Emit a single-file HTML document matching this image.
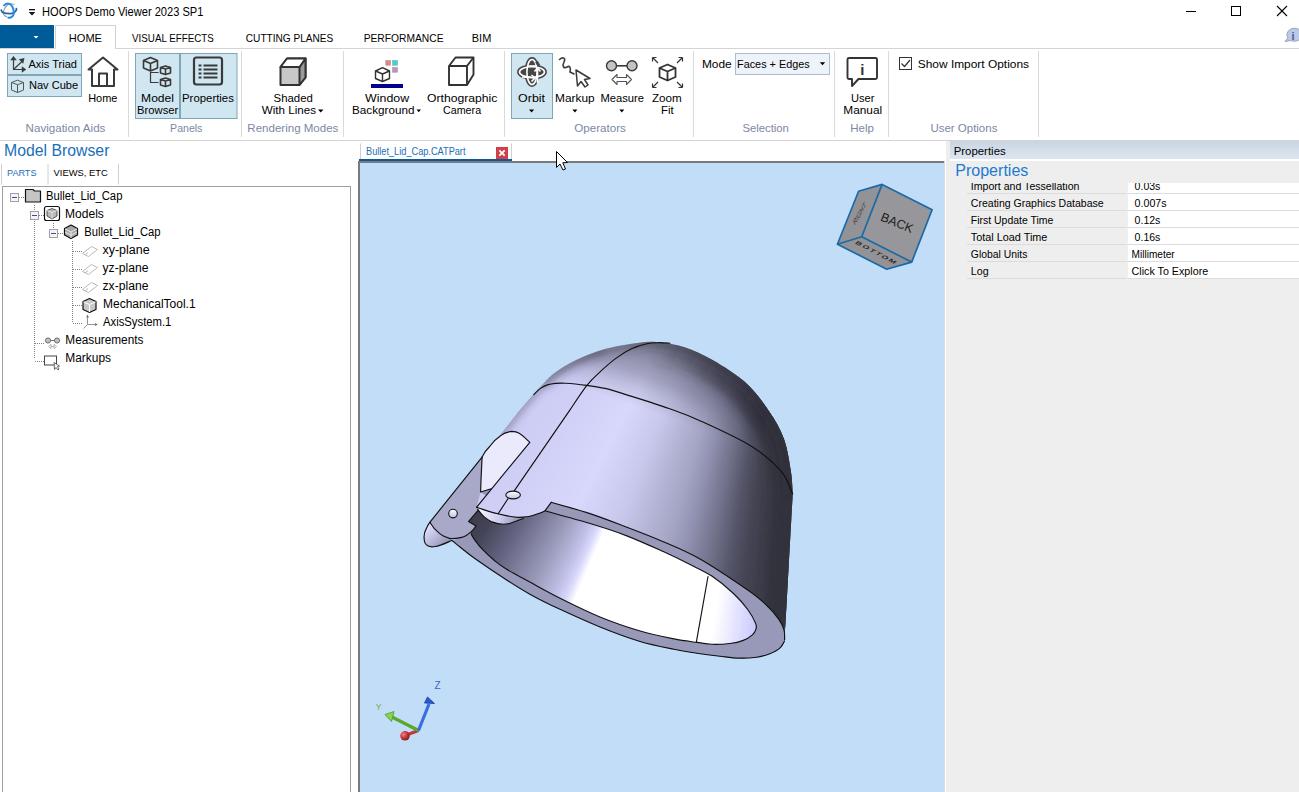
<!DOCTYPE html>
<html><head><meta charset="utf-8"><title>HOOPS Demo Viewer</title>
<style>html,body{margin:0;padding:0;width:1299px;height:792px;overflow:hidden;background:#fff}svg{display:block}text{font-family:"Liberation Sans",sans-serif}</style>
</head><body>
<svg width="1299" height="792" viewBox="0 0 1299 792" font-family="&quot;Liberation Sans&quot;, sans-serif">
<rect x="0" y="0" width="1299" height="792" fill="#ffffff" />
<g fill="none" stroke-linecap="round">
<path d="M13.9 4.5 C12 3.6 9 3.6 7.1 5.3 C5.5 6.8 4 9 3.3 12.1 C3 13.6 3.6 15 4.2 15.3 C5 16 5.8 16.4 6.6 16.6" stroke="#9a9ea4" stroke-width="1.2"/>
<path d="M1.3 10.1 C1.6 11.4 2.2 12.2 2.9 12.5 C4.5 13.4 6.3 13.7 10.1 13.7 C12 13.6 13.2 13.1 14.2 12.4 C15.3 11.6 16.1 10.9 16.3 10.1 C16.5 9.3 16.4 8.9 16.4 8.6" stroke="#1f66ad" stroke-width="1.8"/>
<path d="M4 5.3 C5 4.2 6.3 3.6 7.6 3.5 C9 3.5 10.2 4 11 5 C12 6 12.6 7 13.1 8.3 C13.7 10 13.9 11.8 13.8 13.4 C13.6 14.8 13.1 15.8 12.5 16.3 C11.6 17.2 10.6 17.6 9.5 17.8 L8.3 17.7" stroke="#2a8ce0" stroke-width="2"/>
</g>
<rect x="29" y="9" width="6" height="1.3" fill="#111"/><path d="M28.7 12 L35.3 12 L32 15.5 Z" fill="#111"/>
<text x="42.1" y="16.2" font-size="12.4" fill="#000" font-weight="normal" textLength="161.3" lengthAdjust="spacingAndGlyphs" >HOOPS Demo Viewer 2023 SP1</text>
<rect x="1186" y="11" width="10" height="1" fill="#000" />
<rect x="1231.5" y="6.5" width="9" height="9" fill="none" stroke="#000" stroke-width="1" />
<line x1="1277" y1="6" x2="1287" y2="16" stroke="#000" stroke-width="1.1" />
<line x1="1287" y1="6" x2="1277" y2="16" stroke="#000" stroke-width="1.1" />
<rect x="0" y="25" width="54" height="23" fill="#005c99" />
<path d="M33.5 36 L38.5 36 L36 38.6 Z" fill="#fff"/>
<path d="M55.5 48.5 V25.5 H115.5 V48.5" fill="#fff" stroke="#d0d0d0" stroke-width="1"/>
<line x1="0" y1="48.5" x2="55" y2="48.5" stroke="#d4d4d4" stroke-width="1" />
<line x1="115" y1="48.5" x2="1299" y2="48.5" stroke="#d4d4d4" stroke-width="1" />
<rect x="0" y="49" width="1299" height="0.01" fill="#fff" />
<text x="68.8" y="41.6" font-size="11.2" fill="#000" font-weight="normal" textLength="33.2" lengthAdjust="spacingAndGlyphs" >HOME</text>
<text x="132.0" y="41.6" font-size="11.2" fill="#000" font-weight="normal" textLength="81.9" lengthAdjust="spacingAndGlyphs" >VISUAL EFFECTS</text>
<text x="245.8" y="41.6" font-size="11.2" fill="#000" font-weight="normal" textLength="87.5" lengthAdjust="spacingAndGlyphs" >CUTTING PLANES</text>
<text x="363.7" y="41.6" font-size="11.2" fill="#000" font-weight="normal" textLength="79.8" lengthAdjust="spacingAndGlyphs" >PERFORMANCE</text>
<text x="471.8" y="41.6" font-size="11.2" fill="#000" font-weight="normal" textLength="19.5" lengthAdjust="spacingAndGlyphs" >BIM</text>
<g><path d="M1285 41.5 L1288 38 A7.5 6.5 0 1 1 1291 40.5 Z" fill="#b9c9e6" stroke="#8a94a8" stroke-width="0.8"/>
<text x="1291.5" y="40" font-size="11" font-weight="bold" fill="#4a5a9a" font-family="Liberation Serif">i</text></g>
<line x1="128.5" y1="51" x2="128.5" y2="137" stroke="#dadada" stroke-width="1" />
<line x1="241.5" y1="51" x2="241.5" y2="137" stroke="#dadada" stroke-width="1" />
<line x1="343.5" y1="51" x2="343.5" y2="137" stroke="#dadada" stroke-width="1" />
<line x1="504.5" y1="51" x2="504.5" y2="137" stroke="#dadada" stroke-width="1" />
<line x1="693.5" y1="51" x2="693.5" y2="137" stroke="#dadada" stroke-width="1" />
<line x1="834.5" y1="51" x2="834.5" y2="137" stroke="#dadada" stroke-width="1" />
<line x1="888.5" y1="51" x2="888.5" y2="137" stroke="#dadada" stroke-width="1" />
<line x1="1038.5" y1="51" x2="1038.5" y2="137" stroke="#dadada" stroke-width="1" />
<line x1="0" y1="140.5" x2="1299" y2="140.5" stroke="#d4d4d4" stroke-width="1" />
<text x="25.6" y="132.0" font-size="11.2" fill="#7c88a4" font-weight="normal" textLength="79.8" lengthAdjust="spacingAndGlyphs" >Navigation Aids</text>
<text x="170.1" y="132.0" font-size="11.2" fill="#7c88a4" font-weight="normal" textLength="32.3" lengthAdjust="spacingAndGlyphs" >Panels</text>
<text x="247.3" y="132.0" font-size="11.2" fill="#7c88a4" font-weight="normal" textLength="91.1" lengthAdjust="spacingAndGlyphs" >Rendering Modes</text>
<text x="574.3" y="132.0" font-size="11.2" fill="#7c88a4" font-weight="normal" textLength="51.6" lengthAdjust="spacingAndGlyphs" >Operators</text>
<text x="742.4" y="132.0" font-size="11.2" fill="#7c88a4" font-weight="normal" textLength="46.5" lengthAdjust="spacingAndGlyphs" >Selection</text>
<text x="850.2" y="132.0" font-size="11.2" fill="#7c88a4" font-weight="normal" textLength="23.7" lengthAdjust="spacingAndGlyphs" >Help</text>
<text x="930.4" y="132.0" font-size="11.2" fill="#7c88a4" font-weight="normal" textLength="67.0" lengthAdjust="spacingAndGlyphs" >User Options</text>
<rect x="7.5" y="53.5" width="74" height="21" fill="#d0e6f1" stroke="#7fa6b6" stroke-width="1" />
<rect x="7.5" y="75.5" width="74" height="21" fill="#d0e6f1" stroke="#7fa6b6" stroke-width="1" />
<g stroke="#3c3c3c" stroke-width="1.2" fill="none">
<path d="M13.5 59 V69.5 H24"/><path d="M13.5 69.5 L23 60.5"/>
</g>
<path d="M13.5 56 L10.2 60.3 H16.8 Z M26.2 69.5 L21.8 66.3 V72.7 Z M24.5 58 L18.8 59.3 L23.2 63.7 Z" fill="#3c3c3c"/>
<text x="28.5" y="67.9" font-size="11.8" fill="#000" font-weight="normal" textLength="48.4" lengthAdjust="spacingAndGlyphs" >Axis Triad</text>
<g stroke="#555" stroke-width="1" fill="none" stroke-linejoin="round">
<path d="M11.5 82.5 L17.5 80.2 L23.5 82.5 V90 L17.5 92.5 L11.5 90 Z"/><path d="M11.5 82.5 L17.5 84.7 L23.5 82.5 M17.5 84.7 V92.5"/>
</g>
<text x="28.9" y="89.3" font-size="11.8" fill="#000" font-weight="normal" textLength="49.3" lengthAdjust="spacingAndGlyphs" >Nav Cube</text>
<g stroke="#3a3a3a" stroke-width="2" fill="none" stroke-linejoin="round">
<path d="M88.5 69.5 L103 57.5 L117.5 69.5 H114 V86 H92 V69.5 Z"/><path d="M99 86 V73.5 H107 V86"/>
</g>
<text x="88.2" y="101.8" font-size="11.8" fill="#000" font-weight="normal" textLength="29.2" lengthAdjust="spacingAndGlyphs" >Home</text>
<rect x="135.5" y="53.5" width="44" height="65" fill="#d0e6f1" stroke="#7fa6b6" stroke-width="1" />
<rect x="180.5" y="53.5" width="56.5" height="65" fill="#d0e6f1" stroke="#7fa6b6" stroke-width="1" />
<g stroke="#3a3a3a" stroke-width="1.6" fill="none" stroke-linejoin="round">
<path d="M143.5 60.5 L150.5 57.5 L157.5 60.5 V68 L150.5 71 L143.5 68 Z M143.5 60.5 L150.5 63.5 L157.5 60.5 M150.5 63.5 V71"/>
<path d="M160.5 67.5 L165.5 66 L170.5 67.5 V73 L165.5 74.5 L160.5 73 Z M160.5 67.5 L165.5 69 L170.5 67.5 M165.5 69 V74.5"/>
<path d="M160.5 79.5 L165.5 78 L170.5 79.5 V85 L165.5 86.5 L160.5 85 Z M160.5 79.5 L165.5 81 L170.5 79.5 M165.5 81 V86.5"/>
<path d="M150.5 72 V82.5 H158.5 M150.5 72.5 H158.5" stroke-width="1.2"/>
</g>
<rect x="194" y="57.5" width="28" height="27" rx="2.5" fill="none" stroke="#3a3a3a" stroke-width="2.2"/>
<g fill="#3a3a3a"><rect x="198.5" y="64.5" width="3" height="2"/><rect x="203.5" y="64.5" width="14" height="2"/>
<rect x="198.5" y="68.5" width="3" height="2"/><rect x="203.5" y="68.5" width="14" height="2"/>
<rect x="198.5" y="72.5" width="3" height="2"/><rect x="203.5" y="72.5" width="14" height="2"/>
<rect x="198.5" y="76.5" width="3" height="2"/><rect x="203.5" y="76.5" width="14" height="2"/></g>
<text x="141.1" y="101.8" font-size="11.8" fill="#000" font-weight="normal" textLength="32.9" lengthAdjust="spacingAndGlyphs" >Model</text>
<text x="137.1" y="114.3" font-size="11.8" fill="#000" font-weight="normal" textLength="41.1" lengthAdjust="spacingAndGlyphs" >Browser</text>
<text x="182.0" y="101.8" font-size="11.8" fill="#000" font-weight="normal" textLength="51.9" lengthAdjust="spacingAndGlyphs" >Properties</text>
<g stroke="#333" stroke-width="2" stroke-linejoin="round">
<path d="M280.5 67 L287 58.5 H305.5 V77.5 L299.5 85 H280.5 Z" fill="#c8c8c8"/>
<path d="M299.5 85 V67 L305.5 58.5 V77.5 Z" fill="#9a9a9a"/>
<path d="M280.5 67 H299.5 L305.5 58.5 H287 Z" fill="#ffffff"/>
</g>
<text x="273.6" y="101.8" font-size="11.8" fill="#000" font-weight="normal" textLength="39.3" lengthAdjust="spacingAndGlyphs" >Shaded</text>
<text x="261.8" y="114.3" font-size="11.8" fill="#000" font-weight="normal" textLength="54.2" lengthAdjust="spacingAndGlyphs" >With Lines</text>
<path d="M318 109.5 L323.5 109.5 L320.75 112.5 Z" fill="#000"/>
<g stroke="#333" stroke-width="1.4" fill="#fff" stroke-linejoin="round">
<path d="M375.5 71 L382.5 67.7 L389.5 71 V78.5 L382.5 81.5 L375.5 78.5 Z"/><path d="M375.5 71 L382.5 74 L389.5 71 M382.5 74 V81.5" fill="none"/>
</g>
<rect x="371" y="84" width="32" height="4" fill="#000090"/>
<rect x="385.8" y="60.6" width="4.8" height="4.6" fill="#f08080" stroke="#999" stroke-width="0.6"/>
<rect x="392.6" y="60.6" width="4.8" height="4.6" fill="#20e0e0" stroke="#999" stroke-width="0.6"/>
<rect x="392.6" y="67.6" width="4.8" height="4.6" fill="#c090c8" stroke="#999" stroke-width="0.6"/>
<text x="365.1" y="101.5" font-size="11.8" fill="#000" font-weight="normal" textLength="44.0" lengthAdjust="spacingAndGlyphs" >Window</text>
<text x="352.0" y="114.4" font-size="11.8" fill="#000" font-weight="normal" textLength="62.4" lengthAdjust="spacingAndGlyphs" >Background</text>
<path d="M416.5 109.5 L421 109.5 L418.75 112.3 Z" fill="#000"/>
<g stroke="#333" stroke-width="1.9" fill="none" stroke-linejoin="round">
<path d="M449 66 L455.5 57.5 H473.5 V74.5 L467 85 H449 Z"/><path d="M449 66 H467 L473.5 57.5 M467 66 V85"/>
</g>
<text x="427.0" y="101.5" font-size="11.8" fill="#000" font-weight="normal" textLength="70.4" lengthAdjust="spacingAndGlyphs" >Orthographic</text>
<text x="443.0" y="114.4" font-size="11.8" fill="#000" font-weight="normal" textLength="38.1" lengthAdjust="spacingAndGlyphs" >Camera</text>
<rect x="511.5" y="53.5" width="41" height="65" fill="#d0e6f1" stroke="#7fa6b6" stroke-width="1" />
<g fill="none">
<ellipse cx="532" cy="72" rx="7.5" ry="9" fill="#474747"/>
<ellipse cx="532" cy="72" rx="12.5" ry="5.2" stroke="#474747" stroke-width="4.8" fill="#474747"/>
<ellipse cx="532" cy="72" rx="5.1" ry="12.5" stroke="#474747" stroke-width="4.8" fill="#474747"/>
<ellipse cx="532" cy="72" rx="12.5" ry="5.2" stroke="#fff" stroke-width="1.6"/>
<ellipse cx="532" cy="72" rx="5.1" ry="12.5" stroke="#fff" stroke-width="1.6"/>
<path d="M536.5 61.5 L539 66" stroke="#474747" stroke-width="3"/>
<path d="M527.5 66 H537" stroke="#fff" stroke-width="1.6"/>
<path d="M537.5 68 L537.5 83 M534.5 71.5 L537.5 68 L540.5 71.5" stroke="#fff" stroke-width="1.6"/>
<path d="M522 77 L535 78 M531.5 75 L535 78 L531.5 81.5" stroke="#fff" stroke-width="1.6"/>
</g>
<text x="518.1" y="102.0" font-size="11.8" fill="#000" font-weight="normal" textLength="26.9" lengthAdjust="spacingAndGlyphs" >Orbit</text>
<path d="M529 109.5 L534.2 109.5 L531.6 112.5 Z" fill="#000"/>
<path d="M559.5 59.5 C563 56.5 566 58 564 62 C562 66 563.5 69 567 67 C570 65 571 68 570 72 L574 74" fill="none" stroke="#3a3a3a" stroke-width="1.6" stroke-linecap="round"/>
<path d="M576 70 L577.5 86 L581 81.5 L585 87 L588 85 L584.5 79.5 L590 78.5 Z" fill="#fff" stroke="#3a3a3a" stroke-width="1.5" stroke-linejoin="round"/>
<text x="555.0" y="102.0" font-size="11.8" fill="#000" font-weight="normal" textLength="39.6" lengthAdjust="spacingAndGlyphs" >Markup</text>
<path d="M572.4 109.5 L577.4 109.5 L574.9 112.5 Z" fill="#000"/>
<circle cx="611.5" cy="65.8" r="5" fill="#c4c4c4" stroke="#3a3a3a" stroke-width="1.4"/>
<circle cx="632" cy="65.8" r="5" fill="#c4c4c4" stroke="#3a3a3a" stroke-width="1.4"/>
<line x1="616.5" y1="65.8" x2="627" y2="65.8" stroke="#3a3a3a" stroke-width="1.6"/>
<path d="M612 79.5 L617 74.5 V77.5 H626.5 V74.5 L631.5 79.5 L626.5 84.5 V81.5 H617 V84.5 Z" fill="#fff" stroke="#555" stroke-width="1.1" stroke-linejoin="round"/>
<text x="600.4" y="102.0" font-size="11.8" fill="#000" font-weight="normal" textLength="43.5" lengthAdjust="spacingAndGlyphs" >Measure</text>
<path d="M619.3 109.5 L624.3 109.5 L621.8 112.5 Z" fill="#000"/>
<g stroke="#333" stroke-width="1.2" fill="none">
<path d="M652.5 57.5 L658 63 M652.5 57.5 V61.5 M652.5 57.5 H656.5"/>
<path d="M682.5 57.5 L677 63 M682.5 57.5 V61.5 M682.5 57.5 H678.5"/>
<path d="M652.5 87.5 L658 82 M652.5 87.5 V83.5 M652.5 87.5 H656.5"/>
<path d="M682.5 87.5 L677 82 M682.5 87.5 V83.5 M682.5 87.5 H678.5"/>
</g>
<g stroke="#333" stroke-width="1.8" fill="#fff" stroke-linejoin="round">
<path d="M659.5 68 L667.5 64.5 L675.5 68 V77 L667.5 80.5 L659.5 77 Z"/><path d="M659.5 68 L667.5 71.5 L675.5 68 M667.5 71.5 V80.5" fill="none"/>
</g>
<text x="652.0" y="102.0" font-size="11.8" fill="#000" font-weight="normal" textLength="29.8" lengthAdjust="spacingAndGlyphs" >Zoom</text>
<text x="661.0" y="114.3" font-size="11.8" fill="#000" font-weight="normal" textLength="12.6" lengthAdjust="spacingAndGlyphs" >Fit</text>
<text x="701.9" y="68.1" font-size="11.8" fill="#000" font-weight="normal" textLength="29.8" lengthAdjust="spacingAndGlyphs" >Mode</text>
<rect x="735.5" y="53.5" width="94" height="21" fill="#eef3fa" stroke="#a9bcd8" stroke-width="1" />
<text x="737.0" y="68.1" font-size="11.8" fill="#000" font-weight="normal" textLength="72.7" lengthAdjust="spacingAndGlyphs" >Faces + Edges</text>
<path d="M819.8 62.2 L825.2 62.2 L822.5 65.3 Z" fill="#000"/>
<path d="M849 58 Q847.5 58 847.5 59.5 V77.5 Q847.5 79 849 79 H852 V86 L858.5 79 H875.5 Q877 79 877 77.5 V59.5 Q877 58 875.5 58 Z" fill="none" stroke="#333" stroke-width="1.9" stroke-linejoin="round"/>
<text x="862.3" y="74.5" font-size="15" font-weight="bold" font-family="Liberation Serif" fill="#333" text-anchor="middle">i</text>
<text x="851.0" y="102.0" font-size="11.8" fill="#000" font-weight="normal" textLength="23.4" lengthAdjust="spacingAndGlyphs" >User</text>
<text x="843.3" y="114.3" font-size="11.8" fill="#000" font-weight="normal" textLength="38.8" lengthAdjust="spacingAndGlyphs" >Manual</text>
<rect x="899.5" y="57.5" width="12" height="12" fill="#fff" stroke="#333" stroke-width="1" />
<path d="M901.5 63.5 L904.5 66.5 L910 60" fill="none" stroke="#333" stroke-width="1.2"/>
<text x="917.8" y="68.1" font-size="11.8" fill="#000" font-weight="normal" textLength="111.2" lengthAdjust="spacingAndGlyphs" >Show Import Options</text>
<text x="4.1" y="156.0" font-size="16.8" fill="#1a6fb8" font-weight="normal" textLength="105.3" lengthAdjust="spacingAndGlyphs" >Model Browser</text>
<line x1="1.5" y1="164" x2="1.5" y2="184.5" stroke="#d0d0d0" stroke-width="1" />
<line x1="48" y1="164" x2="48" y2="184.5" stroke="#d0d0d0" stroke-width="1" />
<line x1="118.5" y1="164" x2="118.5" y2="184.5" stroke="#d0d0d0" stroke-width="1" />
<text x="7.0" y="175.9" font-size="9.4" fill="#1a6fb8" font-weight="normal" textLength="29.5" lengthAdjust="spacingAndGlyphs" >PARTS</text>
<text x="53.6" y="175.9" font-size="9.4" fill="#000" font-weight="normal" textLength="54.2" lengthAdjust="spacingAndGlyphs" >VIEWS, ETC</text>
<rect x="2.5" y="186.5" width="348" height="620" fill="#fff" stroke="#a0a0a0" stroke-width="1" />
<rect x="358" y="161" width="587" height="631" fill="#7a7a7a" />
<rect x="360" y="163" width="584" height="629" fill="#c2ddf7" />
<line x1="944.5" y1="161" x2="944.5" y2="792" stroke="#dcdcdc" stroke-width="1" />
<line x1="360.5" y1="143.5" x2="360.5" y2="159" stroke="#d0d0d0" stroke-width="1" />
<line x1="511.5" y1="143.5" x2="511.5" y2="159" stroke="#d0d0d0" stroke-width="1" />
<rect x="359" y="159" width="153" height="2" fill="#0b5a99" />
<text x="366.0" y="155.2" font-size="10.6" fill="#1a70b8" font-weight="normal" textLength="99.5" lengthAdjust="spacingAndGlyphs" >Bullet_Lid_Cap.CATPart</text>
<rect x="496" y="147" width="12" height="12" fill="#cf4048" />
<path d="M499.3 150.3 L504.7 155.7 M504.7 150.3 L499.3 155.7" stroke="#fff" stroke-width="1.8"/>
<rect x="946" y="141" width="353" height="651" fill="#eeeeee" />
<defs><linearGradient id="phdr" x1="0" y1="0" x2="0" y2="1"><stop offset="0" stop-color="#c9d5e3"/><stop offset="1" stop-color="#dde6f0"/></linearGradient></defs>
<rect x="950" y="141" width="349" height="18" fill="url(#phdr)" />
<rect x="950" y="159" width="349" height="2" fill="#ffffff" />
<text x="953.7" y="154.9" font-size="11.8" fill="#000" font-weight="normal" textLength="52.0" lengthAdjust="spacingAndGlyphs" >Properties</text>
<text x="955.2" y="175.6" font-size="16" fill="#1e7ad0" font-weight="normal" textLength="73.2" lengthAdjust="spacingAndGlyphs" >Properties</text>
<rect x="1128" y="183" width="171" height="96" fill="#ffffff" />
<line x1="967" y1="193.5" x2="1299" y2="193.5" stroke="#dcdcdc" stroke-width="1" />
<line x1="967" y1="210.5" x2="1299" y2="210.5" stroke="#dcdcdc" stroke-width="1" />
<line x1="967" y1="227.5" x2="1299" y2="227.5" stroke="#dcdcdc" stroke-width="1" />
<line x1="967" y1="244.5" x2="1299" y2="244.5" stroke="#dcdcdc" stroke-width="1" />
<line x1="967" y1="261.5" x2="1299" y2="261.5" stroke="#dcdcdc" stroke-width="1" />
<line x1="967" y1="278.5" x2="1299" y2="278.5" stroke="#dcdcdc" stroke-width="1" />
<line x1="1127.5" y1="183" x2="1127.5" y2="279" stroke="#eeeeee" stroke-width="1" />
<clipPath id="tclip"><rect x="950" y="183" width="349" height="120"/></clipPath><g clip-path="url(#tclip)">
<text x="970.8" y="189.8" font-size="11.6" fill="#000" font-weight="normal" textLength="108.6" lengthAdjust="spacingAndGlyphs" >Import and Tessellation</text>
<text x="1134.6" y="189.8" font-size="11.6" fill="#000" font-weight="normal" textLength="25.8" lengthAdjust="spacingAndGlyphs" >0.03s</text>
<text x="970.8" y="206.6" font-size="11.6" fill="#000" font-weight="normal" textLength="132.9" lengthAdjust="spacingAndGlyphs" >Creating Graphics Database</text>
<text x="1134.6" y="206.6" font-size="11.6" fill="#000" font-weight="normal" textLength="32.0" lengthAdjust="spacingAndGlyphs" >0.007s</text>
<text x="970.8" y="223.6" font-size="11.6" fill="#000" font-weight="normal" textLength="82.6" lengthAdjust="spacingAndGlyphs" >First Update Time</text>
<text x="1134.6" y="223.6" font-size="11.6" fill="#000" font-weight="normal" textLength="25.8" lengthAdjust="spacingAndGlyphs" >0.12s</text>
<text x="970.8" y="240.6" font-size="11.6" fill="#000" font-weight="normal" textLength="76.6" lengthAdjust="spacingAndGlyphs" >Total Load Time</text>
<text x="1134.6" y="240.6" font-size="11.6" fill="#000" font-weight="normal" textLength="25.8" lengthAdjust="spacingAndGlyphs" >0.16s</text>
<text x="970.8" y="257.6" font-size="11.6" fill="#000" font-weight="normal" textLength="56.6" lengthAdjust="spacingAndGlyphs" >Global Units</text>
<text x="1131.6" y="257.6" font-size="11.6" fill="#000" font-weight="normal" textLength="43.1" lengthAdjust="spacingAndGlyphs" >Millimeter</text>
<text x="970.8" y="274.6" font-size="11.6" fill="#000" font-weight="normal" textLength="17.8" lengthAdjust="spacingAndGlyphs" >Log</text>
<text x="1131.6" y="274.6" font-size="11.6" fill="#000" font-weight="normal" textLength="76.6" lengthAdjust="spacingAndGlyphs" >Click To Explore</text>
</g>
<line x1="34.5" y1="205" x2="34.5" y2="358" stroke="#808080" stroke-width="1" stroke-dasharray="1 1"/>
<line x1="53.5" y1="223" x2="53.5" y2="230" stroke="#808080" stroke-width="1" stroke-dasharray="1 1"/>
<line x1="72.5" y1="241" x2="72.5" y2="322" stroke="#808080" stroke-width="1" stroke-dasharray="1 1"/>
<line x1="19" y1="197.5" x2="25" y2="197.5" stroke="#808080" stroke-width="1" stroke-dasharray="1 1"/>
<rect x="10.5" y="193.5" width="8" height="8" fill="#f4f4f4" stroke="#a0a0a0" stroke-width="1"/>
<rect x="12" y="197" width="5" height="1" fill="#3050b0"/>
<line x1="39" y1="215.5" x2="44" y2="215.5" stroke="#808080" stroke-width="1" stroke-dasharray="1 1"/>
<rect x="30.5" y="211.5" width="8" height="8" fill="#f4f4f4" stroke="#a0a0a0" stroke-width="1"/>
<rect x="32" y="215" width="5" height="1" fill="#3050b0"/>
<line x1="58" y1="233.5" x2="64" y2="233.5" stroke="#808080" stroke-width="1" stroke-dasharray="1 1"/>
<rect x="49.5" y="229.5" width="8" height="8" fill="#f4f4f4" stroke="#a0a0a0" stroke-width="1"/>
<rect x="51" y="233" width="5" height="1" fill="#3050b0"/>
<line x1="73" y1="251.5" x2="82" y2="251.5" stroke="#808080" stroke-width="1" stroke-dasharray="1 1"/>
<line x1="73" y1="269.5" x2="82" y2="269.5" stroke="#808080" stroke-width="1" stroke-dasharray="1 1"/>
<line x1="73" y1="287.5" x2="82" y2="287.5" stroke="#808080" stroke-width="1" stroke-dasharray="1 1"/>
<line x1="73" y1="305.5" x2="82" y2="305.5" stroke="#808080" stroke-width="1" stroke-dasharray="1 1"/>
<line x1="73" y1="323.5" x2="82" y2="323.5" stroke="#808080" stroke-width="1" stroke-dasharray="1 1"/>
<line x1="35" y1="343.5" x2="45" y2="343.5" stroke="#808080" stroke-width="1" stroke-dasharray="1 1"/>
<line x1="35" y1="361.5" x2="45" y2="361.5" stroke="#808080" stroke-width="1" stroke-dasharray="1 1"/>
<path d="M25.5 189.5 H33 L34.5 191 H40.5 V202 H25.5 Z" fill="#c4c4c4" stroke="#111" stroke-width="1.2" stroke-linejoin="round"/>
<rect x="44.5" y="206.5" width="15" height="14" rx="2" fill="#fff" stroke="#111" stroke-width="1.2"/>
<path d="M47 210.5 L52 208.5 L57 210.5 V216 L52 219 L47 216 Z" fill="#b8b8b8" stroke="#333" stroke-width="0.8"/><path d="M47 210.5 L52 212.5 L57 210.5 M52 212.5 V219" fill="none" stroke="#eee" stroke-width="0.8"/>
<path d="M64.5 228.5 L71 225 L77.5 228.5 V235 L71 238.5 L64.5 235 Z" fill="#a8a8a8" stroke="#111" stroke-width="1.2" stroke-linejoin="round"/><path d="M65 229 L71 232 L77 229 M71 232 V238 M65 232 L71 235 L77 232" fill="none" stroke="#e8e8e8" stroke-width="1"/>
<path d="M82.5 253.5 L91.5 246.5 L97.5 249.5 L88.5 256.5 Z M85 255.0 L88 252.5" fill="none" stroke="#b0b0b0" stroke-width="0.9"/>
<path d="M82.5 271.5 L91.5 264.5 L97.5 267.5 L88.5 274.5 Z M85 273.0 L88 270.5" fill="none" stroke="#b0b0b0" stroke-width="0.9"/>
<path d="M82.5 289.5 L91.5 282.5 L97.5 285.5 L88.5 292.5 Z M85 291.0 L88 288.5" fill="none" stroke="#b0b0b0" stroke-width="0.9"/>
<path d="M83 301.5 L89.5 298.5 L96 301.5 V309.5 L89.5 312.5 L83 309.5 Z" fill="#c8c8c8" stroke="#111" stroke-width="1.2" stroke-linejoin="round"/><path d="M83.5 302.0 L89.5 304.5 L95.5 302.0 M89.5 304.5 V312.0" fill="none" stroke="#fff" stroke-width="1"/>
<path d="M87.5 315.5 V324.5 H97 M87.5 324.5 L83.5 328.5" fill="none" stroke="#888" stroke-width="0.9"/><path d="M86 317.5 L87.5 314.5 L89 317.5 Z M95 323.0 L98 324.5 L95 326.0 Z" fill="#777"/>
<circle cx="48" cy="340.5" r="2.6" fill="#c0c0c0" stroke="#555" stroke-width="0.8"/><circle cx="57" cy="340.5" r="2.6" fill="#c0c0c0" stroke="#555" stroke-width="0.8"/><line x1="50.5" y1="340.5" x2="54.5" y2="340.5" stroke="#555" stroke-width="0.8"/><path d="M48.5 346.5 L51 344.3 V348.7 Z M56.5 346.5 L54 344.3 V348.7 Z M51 346.5 H54" fill="none" stroke="#999" stroke-width="0.7"/>
<rect x="44.5" y="356.0" width="12" height="9" fill="#fff" stroke="#444" stroke-width="1"/><path d="M54 362.5 L54.5 369.5 L56 367.5 L58 370.0 L59 369.0 L57.5 366.5 L59.5 366.0 Z" fill="#fff" stroke="#444" stroke-width="0.8"/>
<text x="46.1" y="199.6" font-size="12" fill="#000" font-weight="normal" textLength="76.3" lengthAdjust="spacingAndGlyphs" >Bullet_Lid_Cap</text>
<text x="65.1" y="217.6" font-size="12" fill="#000" font-weight="normal" textLength="38.8" lengthAdjust="spacingAndGlyphs" >Models</text>
<text x="84.2" y="235.7" font-size="12" fill="#000" font-weight="normal" textLength="76.4" lengthAdjust="spacingAndGlyphs" >Bullet_Lid_Cap</text>
<text x="102.5" y="253.7" font-size="12" fill="#000" font-weight="normal" textLength="47.1" lengthAdjust="spacingAndGlyphs" >xy-plane</text>
<text x="102.5" y="271.7" font-size="12" fill="#000" font-weight="normal" textLength="46.0" lengthAdjust="spacingAndGlyphs" >yz-plane</text>
<text x="102.5" y="289.6" font-size="12" fill="#000" font-weight="normal" textLength="46.0" lengthAdjust="spacingAndGlyphs" >zx-plane</text>
<text x="103.0" y="307.7" font-size="12" fill="#000" font-weight="normal" textLength="92.6" lengthAdjust="spacingAndGlyphs" >MechanicalTool.1</text>
<text x="103.0" y="325.7" font-size="12" fill="#000" font-weight="normal" textLength="68.4" lengthAdjust="spacingAndGlyphs" >AxisSystem.1</text>
<text x="65.3" y="343.5" font-size="12" fill="#000" font-weight="normal" textLength="78.1" lengthAdjust="spacingAndGlyphs" >Measurements</text>
<text x="65.3" y="361.5" font-size="12" fill="#000" font-weight="normal" textLength="45.7" lengthAdjust="spacingAndGlyphs" >Markups</text>
<defs>
<linearGradient id="bodyg" gradientUnits="userSpaceOnUse" x1="470" y1="440" x2="792" y2="551">
<stop offset="0" stop-color="#bcbce4"/>
<stop offset="0.2" stop-color="#d2d2f8"/>
<stop offset="0.42" stop-color="#d8d8fc"/>
<stop offset="0.6" stop-color="#b4b4d4"/>
<stop offset="0.7" stop-color="#9494b2"/>
<stop offset="0.78" stop-color="#68687f"/>
<stop offset="0.85" stop-color="#474757"/>
<stop offset="1" stop-color="#3d3d4a"/>
</linearGradient>
<linearGradient id="domeg" gradientUnits="userSpaceOnUse" x1="540.5" y1="374.1" x2="564.0" y2="306.0">
<stop offset="0" stop-color="#1e1e2a" stop-opacity="0"/>
<stop offset="0.25" stop-color="#1e1e2a" stop-opacity="0.12"/>
<stop offset="0.45" stop-color="#1e1e2a" stop-opacity="0.27"/>
<stop offset="0.75" stop-color="#1e1e2a" stop-opacity="0.42"/>
<stop offset="1" stop-color="#1e1e2a" stop-opacity="0.58"/>
</linearGradient>
<linearGradient id="intg" gradientUnits="userSpaceOnUse" x1="478" y1="525" x2="758" y2="622">
<stop offset="0" stop-color="#3c3c4a"/>
<stop offset="0.03" stop-color="#45455a"/>
<stop offset="0.14" stop-color="#6a6a88"/>
<stop offset="0.26" stop-color="#9898b8"/>
<stop offset="0.35" stop-color="#c0c0e8"/>
<stop offset="0.38" stop-color="#d8d8fc"/>
<stop offset="0.405" stop-color="#ffffff"/>
<stop offset="0.84" stop-color="#ffffff"/>
<stop offset="1" stop-color="#c4c4ff"/>
</linearGradient>
<linearGradient id="tipg" gradientUnits="userSpaceOnUse" x1="428" y1="528" x2="446" y2="548">
<stop offset="0" stop-color="#dcdcfc"/><stop offset="1" stop-color="#8c8cac"/>
</linearGradient>
<linearGradient id="clipface" gradientUnits="userSpaceOnUse" x1="480" y1="510" x2="530" y2="525">
<stop offset="0" stop-color="#f4f4ff"/><stop offset="0.45" stop-color="#c8c8ec"/><stop offset="1" stop-color="#6a6a84"/>
</linearGradient>
<linearGradient id="shadowg" gradientUnits="userSpaceOnUse" x1="475" y1="515" x2="545" y2="545">
<stop offset="0" stop-color="#3a3a48"/><stop offset="0.4" stop-color="#444456"/><stop offset="1" stop-color="#6a6a84"/>
</linearGradient>
<linearGradient id="hole1g" x1="0" y1="0" x2="0" y2="1">
<stop offset="0" stop-color="#ffffff"/><stop offset="1" stop-color="#c0c0e0"/>
</linearGradient>
</defs>
<clipPath id="bodyclip"><path d="M482.1 457.1 L509.0 423.8 C510.9 421.4 516.3 414.3 520.2 409.6 C524.1 404.9 528.4 399.9 532.3 395.5 C536.2 391.1 539.5 387.3 543.4 383.4 C547.3 379.5 550.1 376.2 555.5 372.3 C560.9 368.4 567.5 364.1 575.7 360.2 C584.0 356.3 594.4 351.9 605.0 349.0 C615.6 346.1 630.4 343.8 639.2 342.7 C648.0 341.6 650.4 341.4 658.0 342.2 C665.6 342.9 675.4 344.2 684.6 347.2 C693.8 350.2 702.8 354.3 713.0 360.3 C723.2 366.3 736.7 374.6 746.0 383.0 C755.3 391.4 762.4 401.5 768.7 410.8 C775.0 420.1 780.1 428.5 783.8 438.6 C787.5 448.7 789.4 462.2 790.9 471.4 C792.4 480.6 792.4 490.2 792.7 494.0 L785.2 628 L784.9 627.0 C784.8 629.4 785.3 637.7 784.4 641.3 C783.5 644.9 782.0 646.3 779.6 648.4 C777.2 650.5 773.6 652.2 769.8 653.7 C765.9 655.2 761.7 656.6 756.5 657.3 C751.3 658.0 744.9 658.3 738.8 658.1 C732.7 657.9 727.0 657.0 720.0 656.2 C713.0 655.4 704.7 654.4 697.0 653.3 C689.3 652.1 683.5 651.3 673.9 649.3 C664.3 647.3 651.6 644.9 639.3 641.2 C627.0 637.5 613.1 632.3 600.0 627.0 C586.9 621.7 572.2 615.0 560.6 609.6 C549.0 604.2 539.5 599.5 530.3 594.4 C521.1 589.3 514.7 585.1 505.5 579.2 C496.3 573.3 482.8 564.2 475.2 558.8 C467.6 553.4 463.8 550.0 460.0 547.0 C456.2 544.0 453.8 541.8 452.5 540.8 L451.8 540.5 C447 542.5 440 546 435.2 546.5 C431 547.3 427 546 425.3 543.5 C423.5 540 423.6 533 426.1 529.1 C427 526.5 428.5 524 429.8 522.3 L482.1 457.1 Z"/></clipPath>
<g clip-path="url(#bodyclip)"><path d="M810 50L120.6 628.5L124.9 633.6Z" fill="#c4c4ec"/><path d="M810 50L123.1 631.5L127.4 636.6Z" fill="#c4c4ec"/><path d="M810 50L125.6 634.5L130.0 639.6Z" fill="#c4c4ec"/><path d="M810 50L128.2 637.5L132.6 642.5Z" fill="#c5c5ed"/><path d="M810 50L130.8 640.5L135.2 645.5Z" fill="#c5c5ed"/><path d="M810 50L133.3 643.4L137.8 648.4Z" fill="#c5c5ed"/><path d="M810 50L135.9 646.4L140.4 651.3Z" fill="#c5c5ed"/><path d="M810 50L138.5 649.3L143.0 654.3Z" fill="#c5c5ed"/><path d="M810 50L141.2 652.2L145.7 657.2Z" fill="#c5c5ed"/><path d="M810 50L143.8 655.1L148.3 660.1Z" fill="#c6c6ee"/><path d="M810 50L146.5 658.0L151.0 662.9Z" fill="#c6c6ee"/><path d="M810 50L149.1 660.9L153.7 665.8Z" fill="#c6c6ee"/><path d="M810 50L151.8 663.8L156.4 668.7Z" fill="#c6c6ee"/><path d="M810 50L154.5 666.7L159.1 671.5Z" fill="#c6c6ee"/><path d="M810 50L157.2 669.5L161.8 674.3Z" fill="#c6c6ee"/><path d="M810 50L159.9 672.4L164.5 677.2Z" fill="#c7c7ef"/><path d="M810 50L162.6 675.2L167.2 680.0Z" fill="#c7c7ef"/><path d="M810 50L165.3 678.0L170.0 682.8Z" fill="#c7c7ef"/><path d="M810 50L168.1 680.8L172.8 685.6Z" fill="#c7c7ef"/><path d="M810 50L170.8 683.6L175.6 688.3Z" fill="#c7c7ef"/><path d="M810 50L173.6 686.4L178.3 691.1Z" fill="#c7c7ef"/><path d="M810 50L176.4 689.2L181.1 693.8Z" fill="#c8c8f0"/><path d="M810 50L179.2 691.9L184.0 696.6Z" fill="#c8c8f0"/><path d="M810 50L182.0 694.7L186.8 699.3Z" fill="#c8c8f0"/><path d="M810 50L184.8 697.4L189.6 702.0Z" fill="#c8c8f0"/><path d="M810 50L187.6 700.1L192.5 704.7Z" fill="#c8c8f0"/><path d="M810 50L190.5 702.8L195.3 707.4Z" fill="#c8c8f0"/><path d="M810 50L193.3 705.5L198.2 710.1Z" fill="#c9c9f1"/><path d="M810 50L196.2 708.2L201.1 712.8Z" fill="#c9c9f1"/><path d="M810 50L199.1 710.9L204.0 715.4Z" fill="#c9c9f1"/><path d="M810 50L202.0 713.5L206.9 718.0Z" fill="#c9c9f1"/><path d="M810 50L204.9 716.2L209.8 720.7Z" fill="#c9c9f1"/><path d="M810 50L207.8 718.8L212.8 723.3Z" fill="#c9c9f1"/><path d="M810 50L210.7 721.5L215.7 725.9Z" fill="#cacaf2"/><path d="M810 50L213.6 724.1L218.7 728.5Z" fill="#cacaf2"/><path d="M810 50L216.6 726.7L221.6 731.0Z" fill="#cacaf2"/><path d="M810 50L219.5 729.2L224.6 733.6Z" fill="#cacaf2"/><path d="M810 50L222.5 731.8L227.6 736.1Z" fill="#cacaf2"/><path d="M810 50L225.5 734.4L230.6 738.7Z" fill="#cacaf2"/><path d="M810 50L228.5 736.9L233.6 741.2Z" fill="#cbcbf3"/><path d="M810 50L231.5 739.4L236.6 743.7Z" fill="#cbcbf3"/><path d="M810 50L234.5 742.0L239.7 746.2Z" fill="#cbcbf3"/><path d="M810 50L237.5 744.5L242.7 748.7Z" fill="#cbcbf3"/><path d="M810 50L240.6 747.0L245.8 751.2Z" fill="#cbcbf3"/><path d="M810 50L243.6 749.4L248.8 753.6Z" fill="#cbcbf3"/><path d="M810 50L246.7 751.9L251.9 756.1Z" fill="#ccccf4"/><path d="M810 50L249.7 754.3L255.0 758.5Z" fill="#ccccf4"/><path d="M810 50L252.8 756.8L258.1 760.9Z" fill="#ccccf4"/><path d="M810 50L255.9 759.2L261.2 763.3Z" fill="#ccccf4"/><path d="M810 50L259.0 761.6L264.3 765.7Z" fill="#ccccf4"/><path d="M810 50L262.1 764.0L267.4 768.1Z" fill="#cdcdf4"/><path d="M810 50L265.2 766.4L270.6 770.4Z" fill="#cdcdf5"/><path d="M810 50L268.4 768.8L273.7 772.8Z" fill="#cdcdf5"/><path d="M810 50L271.5 771.1L276.9 775.1Z" fill="#cdcdf5"/><path d="M810 50L274.7 773.5L280.0 777.4Z" fill="#cecef5"/><path d="M810 50L277.8 775.8L283.2 779.7Z" fill="#cecef5"/><path d="M810 50L281.0 778.1L286.4 782.0Z" fill="#cecef5"/><path d="M810 50L284.2 780.4L289.6 784.3Z" fill="#cecef6"/><path d="M810 50L287.4 782.7L292.8 786.6Z" fill="#cfcff6"/><path d="M810 50L290.6 785.0L296.0 788.8Z" fill="#cfcff6"/><path d="M810 50L293.8 787.2L299.3 791.0Z" fill="#cfcff6"/><path d="M810 50L297.0 789.5L302.5 793.3Z" fill="#cfcff6"/><path d="M810 50L300.2 791.7L305.8 795.5Z" fill="#d0d0f6"/><path d="M810 50L303.5 793.9L309.0 797.7Z" fill="#d0d0f7"/><path d="M810 50L306.7 796.1L312.3 799.8Z" fill="#d0d0f7"/><path d="M810 50L310.0 798.3L315.6 802.0Z" fill="#d0d0f7"/><path d="M810 50L313.3 800.5L318.8 804.2Z" fill="#d1d1f7"/><path d="M810 50L316.5 802.7L322.1 806.3Z" fill="#d1d1f7"/><path d="M810 50L319.8 804.8L325.4 808.4Z" fill="#d1d1f7"/><path d="M810 50L323.1 806.9L328.8 810.5Z" fill="#d1d1f8"/><path d="M810 50L326.4 809.1L332.1 812.6Z" fill="#d2d2f8"/><path d="M810 50L329.7 811.2L335.4 814.7Z" fill="#d2d2f8"/><path d="M810 50L333.1 813.2L338.7 816.8Z" fill="#d2d2f8"/><path d="M810 50L336.4 815.3L342.1 818.8Z" fill="#d2d2f8"/><path d="M810 50L339.8 817.4L345.5 820.8Z" fill="#d3d3f8"/><path d="M810 50L343.1 819.4L348.8 822.9Z" fill="#d3d3f9"/><path d="M810 50L346.5 821.5L352.2 824.9Z" fill="#d3d3f9"/><path d="M810 50L349.8 823.5L355.6 826.9Z" fill="#d4d4f9"/><path d="M810 50L353.2 825.5L359.0 828.8Z" fill="#d4d4f9"/><path d="M810 50L356.6 827.5L362.4 830.8Z" fill="#d4d4fa"/><path d="M810 50L360.0 829.4L365.8 832.7Z" fill="#d5d5fa"/><path d="M810 50L363.4 831.4L369.2 834.7Z" fill="#d5d5fa"/><path d="M810 50L366.8 833.3L372.6 836.6Z" fill="#d5d5fa"/><path d="M810 50L370.2 835.2L376.1 838.5Z" fill="#d5d5fa"/><path d="M810 50L373.7 837.2L379.5 840.4Z" fill="#d6d6fa"/><path d="M810 50L377.1 839.1L383.0 842.2Z" fill="#d6d6fb"/><path d="M810 50L380.6 840.9L386.4 844.1Z" fill="#d6d6fb"/><path d="M810 50L384.0 842.8L389.9 845.9Z" fill="#d7d7fb"/><path d="M810 50L387.5 844.7L393.4 847.8Z" fill="#d7d7fb"/><path d="M810 50L390.9 846.5L396.9 849.6Z" fill="#d7d7fc"/><path d="M810 50L394.4 848.3L400.4 851.4Z" fill="#d8d8fc"/><path d="M810 50L397.9 850.1L403.9 853.2Z" fill="#d8d8fc"/><path d="M810 50L401.4 851.9L407.4 854.9Z" fill="#d8d8fc"/><path d="M810 50L404.9 853.7L410.9 856.7Z" fill="#d7d7fb"/><path d="M810 50L408.4 855.4L414.4 858.4Z" fill="#d6d6fa"/><path d="M810 50L411.9 857.2L417.9 860.1Z" fill="#d5d5f9"/><path d="M810 50L415.5 858.9L421.5 861.8Z" fill="#d4d4f8"/><path d="M810 50L419.0 860.6L425.0 863.5Z" fill="#d4d4f8"/><path d="M810 50L422.5 862.3L428.6 865.2Z" fill="#d3d3f7"/><path d="M810 50L426.1 864.0L432.1 866.8Z" fill="#d2d2f6"/><path d="M810 50L429.6 865.7L435.7 868.5Z" fill="#d1d1f5"/><path d="M810 50L433.2 867.3L439.3 870.1Z" fill="#d0d0f4"/><path d="M810 50L436.8 869.0L442.9 871.7Z" fill="#d0d0f4"/><path d="M810 50L440.4 870.6L446.4 873.3Z" fill="#cfcff3"/><path d="M810 50L443.9 872.2L450.0 874.9Z" fill="#cecef2"/><path d="M810 50L447.5 873.8L453.6 876.4Z" fill="#cdcdf1"/><path d="M810 50L451.1 875.4L457.3 878.0Z" fill="#ccccf0"/><path d="M810 50L454.7 876.9L460.9 879.5Z" fill="#ccccf0"/><path d="M810 50L458.3 878.5L464.5 881.0Z" fill="#cbcbef"/><path d="M810 50L462.0 880.0L468.1 882.5Z" fill="#cacaee"/><path d="M810 50L465.6 881.5L471.8 884.0Z" fill="#c9c9ed"/><path d="M810 50L469.2 883.0L475.4 885.5Z" fill="#c8c8ec"/><path d="M810 50L472.9 884.5L479.1 886.9Z" fill="#c7c7eb"/><path d="M810 50L476.5 885.9L482.7 888.4Z" fill="#c6c6ea"/><path d="M810 50L480.1 887.4L486.4 889.8Z" fill="#c4c4e8"/><path d="M810 50L483.8 888.8L490.0 891.2Z" fill="#c3c3e6"/><path d="M810 50L487.5 890.2L493.7 892.6Z" fill="#c1c1e4"/><path d="M810 50L491.1 891.6L497.4 894.0Z" fill="#c0c0e3"/><path d="M810 50L494.8 893.0L501.1 895.3Z" fill="#bebee1"/><path d="M810 50L498.5 894.4L504.8 896.7Z" fill="#bdbde0"/><path d="M810 50L502.2 895.7L508.5 898.0Z" fill="#bbbbde"/><path d="M810 50L505.9 897.1L512.2 899.3Z" fill="#babadc"/><path d="M810 50L509.6 898.4L515.9 900.6Z" fill="#b8b8da"/><path d="M810 50L513.3 899.7L519.6 901.9Z" fill="#b7b7d9"/><path d="M810 50L517.0 901.0L523.3 903.1Z" fill="#b5b5d7"/><path d="M810 50L520.7 902.2L527.0 904.4Z" fill="#b4b4d6"/><path d="M810 50L524.4 903.5L530.8 905.6Z" fill="#b2b2d4"/><path d="M810 50L528.2 904.7L534.5 906.8Z" fill="#b1b1d2"/><path d="M810 50L531.9 906.0L538.2 908.0Z" fill="#afafd0"/><path d="M810 50L535.6 907.2L542.0 909.2Z" fill="#aeaecf"/><path d="M810 50L539.4 908.3L545.7 910.3Z" fill="#acaccd"/><path d="M810 50L543.1 909.5L549.5 911.5Z" fill="#ababcc"/><path d="M810 50L546.9 910.7L553.3 912.6Z" fill="#a9a9ca"/><path d="M810 50L550.6 911.8L557.0 913.7Z" fill="#a8a8c8"/><path d="M810 50L554.4 912.9L560.8 914.8Z" fill="#a6a6c6"/><path d="M810 50L558.2 914.0L564.6 915.9Z" fill="#a5a5c5"/><path d="M810 50L561.9 915.1L568.4 917.0Z" fill="#a3a3c3"/><path d="M810 50L565.7 916.2L572.1 918.0Z" fill="#a1a1c1"/><path d="M810 50L569.5 917.3L575.9 919.0Z" fill="#9e9ebe"/><path d="M810 50L573.3 918.3L579.7 920.0Z" fill="#9c9cbc"/><path d="M810 50L577.1 919.3L583.5 921.0Z" fill="#9a9aba"/><path d="M810 50L580.9 920.3L587.3 922.0Z" fill="#9898b8"/><path d="M810 50L584.7 921.3L591.1 923.0Z" fill="#9595b5"/><path d="M810 50L588.5 922.3L594.9 923.9Z" fill="#9393b3"/><path d="M810 50L592.3 923.3L598.8 924.9Z" fill="#9191b1"/><path d="M810 50L596.1 924.2L602.6 925.8Z" fill="#8e8eae"/><path d="M810 50L599.9 925.1L606.4 926.7Z" fill="#8b8baa"/><path d="M810 50L603.7 926.0L610.2 927.5Z" fill="#8888a7"/><path d="M810 50L607.5 926.9L614.1 928.4Z" fill="#8686a3"/><path d="M810 50L611.4 927.8L617.9 929.3Z" fill="#8383a0"/><path d="M810 50L615.2 928.7L621.7 930.1Z" fill="#80809d"/><path d="M810 50L619.0 929.5L625.6 930.9Z" fill="#7d7d99"/><path d="M810 50L622.9 930.3L629.4 931.7Z" fill="#7a7a96"/><path d="M810 50L626.7 931.1L633.3 932.5Z" fill="#787892"/><path d="M810 50L630.6 931.9L637.1 933.2Z" fill="#75758f"/><path d="M810 50L634.4 932.7L641.0 934.0Z" fill="#72728b"/><path d="M810 50L638.3 933.5L644.8 934.7Z" fill="#6f6f88"/><path d="M810 50L642.1 934.2L648.7 935.4Z" fill="#6c6c84"/><path d="M810 50L646.0 934.9L652.6 936.1Z" fill="#686880"/><path d="M810 50L649.9 935.6L656.4 936.8Z" fill="#65657c"/><path d="M810 50L653.7 936.3L660.3 937.5Z" fill="#626279"/><path d="M810 50L657.6 937.0L664.2 938.1Z" fill="#5f5f75"/><path d="M810 50L661.5 937.7L668.0 938.7Z" fill="#5c5c71"/><path d="M810 50L665.3 938.3L671.9 939.3Z" fill="#59596d"/><path d="M810 50L669.2 938.9L675.8 939.9Z" fill="#56566a"/><path d="M810 50L673.1 939.5L679.7 940.5Z" fill="#535367"/><path d="M810 50L677.0 940.1L683.6 941.1Z" fill="#515164"/><path d="M810 50L680.9 940.7L687.5 941.6Z" fill="#4f4f61"/><path d="M810 50L684.7 941.2L691.4 942.1Z" fill="#4c4c5e"/><path d="M810 50L688.6 941.8L695.3 942.7Z" fill="#4a4a5b"/><path d="M810 50L692.5 942.3L699.1 943.1Z" fill="#484858"/><path d="M810 50L696.4 942.8L703.0 943.6Z" fill="#454555"/><path d="M810 50L700.3 943.3L706.9 944.1Z" fill="#444453"/><path d="M810 50L704.2 943.8L710.8 944.5Z" fill="#424252"/><path d="M810 50L708.1 944.2L714.8 944.9Z" fill="#424250"/><path d="M810 50L712.0 944.7L718.7 945.4Z" fill="#40404f"/><path d="M810 50L715.9 945.1L722.6 945.7Z" fill="#40404d"/><path d="M810 50L719.8 945.5L726.5 946.1Z" fill="#3e3e4c"/><path d="M810 50L723.7 945.9L730.4 946.5Z" fill="#3e3e4b"/><path d="M810 50L727.6 946.2L734.3 946.8Z" fill="#3e3e4b"/><path d="M810 50L731.6 946.6L738.2 947.1Z" fill="#3e3e4b"/><path d="M810 50L735.5 946.9L742.1 947.4Z" fill="#3e3e4b"/><path d="M810 50L739.4 947.2L746.0 947.7Z" fill="#3e3e4b"/><path d="M810 50L743.3 947.5L750.0 948.0Z" fill="#3e3e4b"/><path d="M810 50L747.2 947.8L753.9 948.2Z" fill="#3e3e4b"/><path d="M810 50L751.1 948.1L757.8 948.5Z" fill="#3e3e4b"/><path d="M810 50L755.1 948.3L761.7 948.7Z" fill="#3e3e4b"/><path d="M810 50L759.0 948.6L765.6 948.9Z" fill="#3e3e4b"/><path d="M810 50L762.9 948.8L769.6 949.1Z" fill="#3e3e4b"/><path d="M810 50L766.8 949.0L773.5 949.3Z" fill="#3e3e4b"/><path d="M810 50L770.7 949.1L777.4 949.4Z" fill="#3e3e4b"/><path d="M810 50L774.7 949.3L781.3 949.5Z" fill="#3e3e4b"/><path d="M810 50L778.6 949.5L785.3 949.7Z" fill="#3e3e4b"/><path d="M810 50L782.5 949.6L789.2 949.8Z" fill="#3e3e4b"/><path d="M810 50L786.4 949.7L793.1 949.8Z" fill="#3e3e4b"/><path d="M810 50L790.4 949.8L797.0 949.9Z" fill="#3e3e4b"/><path d="M810 50L794.3 949.9L801.0 950.0Z" fill="#3e3e4b"/><path d="M810 50L798.2 949.9L804.9 950.0Z" fill="#3e3e4b"/><path d="M810 50L802.1 950.0L808.8 950.0Z" fill="#3e3e4b"/><path d="M810 50L806.1 950.0L812.7 950.0Z" fill="#3e3e4b"/><path d="M810 50L810.0 950.0L816.7 950.0Z" fill="#3e3e4b"/><path d="M810 50L813.9 950.0L820.6 949.9Z" fill="#3e3e4b"/><path d="M810 50L817.9 950.0L824.5 949.9Z" fill="#3e3e4b"/><path d="M810 50L821.8 949.9L828.5 949.8Z" fill="#3e3e4b"/><path d="M810 50L825.7 949.9L832.4 949.7Z" fill="#3e3e4b"/><path d="M810 50L829.6 949.8L836.3 949.6Z" fill="#3e3e4b"/><path d="M810 50L833.6 949.7L840.2 949.5Z" fill="#3e3e4b"/><path d="M810 50L837.5 949.6L844.2 949.4Z" fill="#3e3e4b"/><path d="M810 50L841.4 949.5L848.1 949.2Z" fill="#3e3e4b"/><path d="M810 50L845.3 949.3L852.0 949.0Z" fill="#3e3e4b"/><path d="M810 50L849.3 949.1L855.9 948.8Z" fill="#3e3e4b"/><path d="M810 50L853.2 949.0L859.8 948.6Z" fill="#3e3e4b"/><path d="M810 50L857.1 948.8L863.8 948.4Z" fill="#3e3e4b"/><path d="M810 50L861.0 948.6L867.7 948.1Z" fill="#3e3e4b"/><path d="M810 50L864.9 948.3L871.6 947.9Z" fill="#3e3e4b"/><path d="M810 50L868.9 948.1L875.5 947.6Z" fill="#3e3e4b"/><path d="M810 50L872.8 947.8L879.4 947.3Z" fill="#3e3e4b"/><path d="M810 50L876.7 947.5L883.4 947.0Z" fill="#3e3e4b"/><path d="M810 50L880.6 947.2L887.3 946.7Z" fill="#3e3e4b"/><path d="M810 50L884.5 946.9L891.2 946.3Z" fill="#3e3e4b"/><path d="M810 50L888.4 946.6L895.1 946.0Z" fill="#3e3e4b"/><path d="M810 50L892.4 946.2L899.0 945.6Z" fill="#3e3e4b"/><path d="M810 50L896.3 945.9L902.9 945.2Z" fill="#3e3e4b"/><path d="M810 50L900.2 945.5L906.8 944.8Z" fill="#3e3e4b"/></g>
<g clip-path="url(#bodyclip)"><rect x="400" y="330" width="420" height="340" fill="url(#domeg)"/></g>
<filter id="blur6" filterUnits="userSpaceOnUse" x="380" y="300" width="460" height="400"><feGaussianBlur stdDeviation="5"/></filter><filter id="blur4" filterUnits="userSpaceOnUse" x="380" y="300" width="460" height="400"><feGaussianBlur stdDeviation="3"/></filter>
<linearGradient id="edgeg" gradientUnits="userSpaceOnUse" x1="650" y1="350" x2="775" y2="420"><stop offset="0" stop-color="#30303c" stop-opacity="0"/><stop offset="0.5" stop-color="#30303c" stop-opacity="0.55"/><stop offset="1" stop-color="#30303c" stop-opacity="0.9"/></linearGradient>
<g clip-path="url(#bodyclip)"><path d="M543.4 383.4 C545.4 381.5 550.1 376.2 555.5 372.3 C560.9 368.4 567.5 364.1 575.7 360.2 C584.0 356.3 594.4 351.9 605.0 349.0 C615.6 346.1 630.4 343.8 639.2 342.7 C648.0 341.6 650.4 341.4 658.0 342.2 C665.6 342.9 675.4 344.2 684.6 347.2 C693.8 350.2 702.8 354.3 713.0 360.3 C723.2 366.3 736.7 374.6 746.0 383.0 C755.3 391.4 762.4 401.5 768.7 410.8 C775.0 420.1 780.1 428.5 783.8 438.6 C787.5 448.7 789.4 462.2 790.9 471.4 C792.4 480.6 792.4 490.2 792.7 494.0 L785.2 628" fill="none" stroke="url(#edgeg)" stroke-width="44" filter="url(#blur6)"/><path d="M543.4 383.4 C545.4 381.5 550.1 376.2 555.5 372.3 C560.9 368.4 567.5 364.1 575.7 360.2 C584.0 356.3 594.4 351.9 605.0 349.0 C615.6 346.1 630.4 343.8 639.2 342.7 C648.0 341.6 650.4 341.4 658.0 342.2 C665.6 342.9 675.4 344.2 684.6 347.2 C693.8 350.2 702.8 354.3 713.0 360.3 C723.2 366.3 736.7 374.6 746.0 383.0 C755.3 391.4 762.4 401.5 768.7 410.8 C775.0 420.1 780.1 428.5 783.8 438.6 C787.5 448.7 789.4 462.2 790.9 471.4 C792.4 480.6 792.4 490.2 792.7 494.0" fill="none" stroke="#30303c" stroke-opacity="0.3" stroke-width="12" filter="url(#blur6)"/><path d="M470 472 L482.1 457.1 L509.0 423.8 C510.9 421.4 516.3 414.3 520.2 409.6 C524.1 404.9 528.4 399.9 532.3 395.5 C536.2 391.1 539.5 387.3 543.4 383.4 C547.3 379.5 550.1 376.2 555.5 372.3 C560.9 368.4 567.5 364.1 575.7 360.2 C584.0 356.3 600.1 350.9 605.0 349.0" fill="none" stroke="#40405a" stroke-opacity="0.32" stroke-width="9" filter="url(#blur4)"/></g>
<path d="M551.2 502.3 C557.6 504.1 576.8 509.3 589.3 513.4 C601.8 517.5 613.9 522.3 626.2 527.0 C638.5 531.7 650.9 536.4 663.2 541.7 C675.5 547.0 685.9 551.0 700.0 559.0 C714.1 567.0 736.8 582.5 747.7 590.0 C758.6 597.5 760.2 599.3 765.4 604.2 C770.6 609.1 775.6 614.9 778.7 619.2 C781.8 623.5 783.0 626.4 784.0 629.8 C785.0 633.2 784.5 638.0 784.6 639.6 L784.4 641.3 L784.4 641.3 C783.6 642.5 782.0 646.3 779.6 648.4 C777.2 650.5 773.6 652.2 769.8 653.7 C765.9 655.2 761.7 656.6 756.5 657.3 C751.3 658.0 744.9 658.3 738.8 658.1 C732.7 657.9 727.0 657.0 720.0 656.2 C713.0 655.4 704.7 654.4 697.0 653.3 C689.3 652.1 683.5 651.3 673.9 649.3 C664.3 647.3 651.6 644.9 639.3 641.2 C627.0 637.5 613.1 632.3 600.0 627.0 C586.9 621.7 572.2 615.0 560.6 609.6 C549.0 604.2 539.5 599.5 530.3 594.4 C521.1 589.3 514.7 585.1 505.5 579.2 C496.3 573.3 482.8 564.2 475.2 558.8 C467.6 553.4 463.8 550.0 460.0 547.0 C456.2 544.0 453.8 541.8 452.5 540.8 L470 533.6 L471.0 533.8 C471.7 534.9 473.2 538.0 475.2 540.6 C477.1 543.2 479.5 546.4 482.7 549.7 C485.9 553.0 490.3 557.1 494.1 560.3 C497.9 563.4 499.5 564.9 505.5 568.6 C511.5 572.3 521.1 577.3 530.3 582.3 C539.5 587.3 549.0 592.7 560.6 598.5 C572.2 604.3 586.9 611.6 600.0 617.0 C613.1 622.4 627.0 627.1 639.3 630.8 C651.6 634.4 664.3 637.0 673.9 638.9 C683.5 640.8 690.7 641.5 697.0 642.4 C703.3 643.3 706.3 644.1 711.8 644.3 C717.3 644.5 724.8 644.1 730.0 643.5 C735.2 642.9 739.6 641.8 743.3 640.4 C747.0 639.0 750.0 636.9 752.1 635.1 C754.2 633.3 755.1 631.7 755.7 629.8 C756.3 627.9 757.0 627.0 755.7 623.6 C754.4 620.2 751.4 614.5 747.7 609.5 C744.0 604.5 739.5 599.1 733.5 593.5 C727.5 587.9 719.0 580.9 711.8 576.1 C704.5 571.3 698.1 568.6 690.0 564.5 C681.9 560.4 673.8 556.4 663.2 551.6 C652.6 546.8 638.5 540.3 626.2 535.6 C613.9 530.9 602.8 527.4 589.3 523.3 C575.8 519.2 552.4 512.9 545.0 510.8 L551.2 502.3 Z" fill="#9898b8"/>
<clipPath id="holeclip"><path d="M545.0 510.8 C552.4 512.9 575.8 519.2 589.3 523.3 C602.8 527.4 613.9 530.9 626.2 535.6 C638.5 540.3 652.6 546.8 663.2 551.6 C673.8 556.4 681.9 560.4 690.0 564.5 C698.1 568.6 704.5 571.3 711.8 576.1 C719.0 580.9 727.5 587.9 733.5 593.5 C739.5 599.1 744.0 604.5 747.7 609.5 C751.4 614.5 754.4 620.2 755.7 623.6 C757.0 627.0 756.3 627.9 755.7 629.8 C755.1 631.7 754.2 633.3 752.1 635.1 C750.0 636.9 747.0 639.0 743.3 640.4 C739.6 641.8 735.2 642.9 730.0 643.5 C724.8 644.1 717.3 644.5 711.8 644.3 C706.3 644.1 703.3 643.3 697.0 642.4 C690.7 641.5 683.5 640.8 673.9 638.9 C664.3 637.0 651.6 634.4 639.3 630.8 C627.0 627.1 613.1 622.4 600.0 617.0 C586.9 611.6 572.2 604.3 560.6 598.5 C549.0 592.7 539.5 587.3 530.3 582.3 C521.1 577.3 511.5 572.3 505.5 568.6 C499.5 564.9 497.9 563.4 494.1 560.3 C490.3 557.1 485.9 553.0 482.7 549.7 C479.5 546.4 477.1 543.2 475.2 540.6 C473.2 538.0 471.7 534.9 471.0 533.8 L468.5 521.5 L477.7 509.2 L476.5 507.3  C485 510 490 512 498.1 513.8 C505 515.5 512 517.3 518.8 517.3 C525 517.2 530 516.5 534.2 515 C539 513.5 543 512 545 510.8 Z"/></clipPath>
<g clip-path="url(#holeclip)"><path d="M810 50L231.5 739.4L236.6 743.7Z" fill="#3c3c4a"/><path d="M810 50L234.5 742.0L239.7 746.2Z" fill="#3c3c4a"/><path d="M810 50L237.5 744.5L242.7 748.7Z" fill="#3c3c4a"/><path d="M810 50L240.6 747.0L245.8 751.2Z" fill="#3c3c4a"/><path d="M810 50L243.6 749.4L248.8 753.6Z" fill="#3c3c4a"/><path d="M810 50L246.7 751.9L251.9 756.1Z" fill="#3c3c4a"/><path d="M810 50L249.7 754.3L255.0 758.5Z" fill="#3c3c4a"/><path d="M810 50L252.8 756.8L258.1 760.9Z" fill="#3c3c4a"/><path d="M810 50L255.9 759.2L261.2 763.3Z" fill="#3c3c4a"/><path d="M810 50L259.0 761.6L264.3 765.7Z" fill="#3c3c4a"/><path d="M810 50L262.1 764.0L267.4 768.1Z" fill="#3c3c4a"/><path d="M810 50L265.2 766.4L270.6 770.4Z" fill="#3c3c4a"/><path d="M810 50L268.4 768.8L273.7 772.8Z" fill="#3c3c4a"/><path d="M810 50L271.5 771.1L276.9 775.1Z" fill="#3c3c4a"/><path d="M810 50L274.7 773.5L280.0 777.4Z" fill="#3c3c4a"/><path d="M810 50L277.8 775.8L283.2 779.7Z" fill="#3c3c4a"/><path d="M810 50L281.0 778.1L286.4 782.0Z" fill="#3d3d4b"/><path d="M810 50L284.2 780.4L289.6 784.3Z" fill="#3e3e4d"/><path d="M810 50L287.4 782.7L292.8 786.6Z" fill="#3f3f4f"/><path d="M810 50L290.6 785.0L296.0 788.8Z" fill="#404051"/><path d="M810 50L293.8 787.2L299.3 791.0Z" fill="#414153"/><path d="M810 50L297.0 789.5L302.5 793.3Z" fill="#424255"/><path d="M810 50L300.2 791.7L305.8 795.5Z" fill="#434357"/><path d="M810 50L303.5 793.9L309.0 797.7Z" fill="#444459"/><path d="M810 50L306.7 796.1L312.3 799.8Z" fill="#47475c"/><path d="M810 50L310.0 798.3L315.6 802.0Z" fill="#4a4a60"/><path d="M810 50L313.3 800.5L318.8 804.2Z" fill="#4d4d64"/><path d="M810 50L316.5 802.7L322.1 806.3Z" fill="#505067"/><path d="M810 50L319.8 804.8L325.4 808.4Z" fill="#53536b"/><path d="M810 50L323.1 806.9L328.8 810.5Z" fill="#56566f"/><path d="M810 50L326.4 809.1L332.1 812.6Z" fill="#595973"/><path d="M810 50L329.7 811.2L335.4 814.7Z" fill="#5c5c77"/><path d="M810 50L333.1 813.2L338.7 816.8Z" fill="#5f5f7b"/><path d="M810 50L336.4 815.3L342.1 818.8Z" fill="#62627e"/><path d="M810 50L339.8 817.4L345.5 820.8Z" fill="#656582"/><path d="M810 50L343.1 819.4L348.8 822.9Z" fill="#686886"/><path d="M810 50L346.5 821.5L352.2 824.9Z" fill="#6c6c8a"/><path d="M810 50L349.8 823.5L355.6 826.9Z" fill="#6f6f8d"/><path d="M810 50L353.2 825.5L359.0 828.8Z" fill="#727291"/><path d="M810 50L356.6 827.5L362.4 830.8Z" fill="#767694"/><path d="M810 50L360.0 829.4L365.8 832.7Z" fill="#797997"/><path d="M810 50L363.4 831.4L369.2 834.7Z" fill="#7c7c9b"/><path d="M810 50L366.8 833.3L372.6 836.6Z" fill="#7f7f9e"/><path d="M810 50L370.2 835.2L376.1 838.5Z" fill="#8383a2"/><path d="M810 50L373.7 837.2L379.5 840.4Z" fill="#8686a5"/><path d="M810 50L377.1 839.1L383.0 842.2Z" fill="#8989a9"/><path d="M810 50L380.6 840.9L386.4 844.1Z" fill="#8c8cac"/><path d="M810 50L384.0 842.8L389.9 845.9Z" fill="#9090af"/><path d="M810 50L387.5 844.7L393.4 847.8Z" fill="#9393b3"/><path d="M810 50L390.9 846.5L396.9 849.6Z" fill="#9696b6"/><path d="M810 50L394.4 848.3L400.4 851.4Z" fill="#9a9aba"/><path d="M810 50L397.9 850.1L403.9 853.2Z" fill="#9e9ebf"/><path d="M810 50L401.4 851.9L407.4 854.9Z" fill="#a2a2c4"/><path d="M810 50L404.9 853.7L410.9 856.7Z" fill="#a6a6c9"/><path d="M810 50L408.4 855.4L414.4 858.4Z" fill="#aaaace"/><path d="M810 50L411.9 857.2L417.9 860.1Z" fill="#aeaed2"/><path d="M810 50L415.5 858.9L421.5 861.8Z" fill="#b2b2d7"/><path d="M810 50L419.0 860.6L425.0 863.5Z" fill="#b6b6dc"/><path d="M810 50L422.5 862.3L428.6 865.2Z" fill="#babae1"/><path d="M810 50L426.1 864.0L432.1 866.8Z" fill="#bebee6"/><path d="M810 50L429.6 865.7L435.7 868.5Z" fill="#c3c3ea"/><path d="M810 50L433.2 867.3L439.3 870.1Z" fill="#c9c9f0"/><path d="M810 50L436.8 869.0L442.9 871.7Z" fill="#cfcff4"/><path d="M810 50L440.4 870.6L446.4 873.3Z" fill="#d5d5fa"/><path d="M810 50L443.9 872.2L450.0 874.9Z" fill="#dedefc"/><path d="M810 50L447.5 873.8L453.6 876.4Z" fill="#eaeafd"/><path d="M810 50L451.1 875.4L457.3 878.0Z" fill="#f6f6fe"/><path d="M810 50L454.7 876.9L460.9 879.5Z" fill="#ffffff"/><path d="M810 50L458.3 878.5L464.5 881.0Z" fill="#ffffff"/><path d="M810 50L462.0 880.0L468.1 882.5Z" fill="#ffffff"/><path d="M810 50L465.6 881.5L471.8 884.0Z" fill="#ffffff"/><path d="M810 50L469.2 883.0L475.4 885.5Z" fill="#ffffff"/><path d="M810 50L472.9 884.5L479.1 886.9Z" fill="#ffffff"/><path d="M810 50L476.5 885.9L482.7 888.4Z" fill="#ffffff"/><path d="M810 50L480.1 887.4L486.4 889.8Z" fill="#ffffff"/><path d="M810 50L483.8 888.8L490.0 891.2Z" fill="#ffffff"/><path d="M810 50L487.5 890.2L493.7 892.6Z" fill="#ffffff"/><path d="M810 50L491.1 891.6L497.4 894.0Z" fill="#ffffff"/><path d="M810 50L494.8 893.0L501.1 895.3Z" fill="#ffffff"/><path d="M810 50L498.5 894.4L504.8 896.7Z" fill="#ffffff"/><path d="M810 50L502.2 895.7L508.5 898.0Z" fill="#ffffff"/><path d="M810 50L505.9 897.1L512.2 899.3Z" fill="#ffffff"/><path d="M810 50L509.6 898.4L515.9 900.6Z" fill="#ffffff"/><path d="M810 50L513.3 899.7L519.6 901.9Z" fill="#ffffff"/><path d="M810 50L517.0 901.0L523.3 903.1Z" fill="#ffffff"/><path d="M810 50L520.7 902.2L527.0 904.4Z" fill="#ffffff"/><path d="M810 50L524.4 903.5L530.8 905.6Z" fill="#ffffff"/><path d="M810 50L528.2 904.7L534.5 906.8Z" fill="#ffffff"/><path d="M810 50L531.9 906.0L538.2 908.0Z" fill="#ffffff"/><path d="M810 50L535.6 907.2L542.0 909.2Z" fill="#ffffff"/><path d="M810 50L539.4 908.3L545.7 910.3Z" fill="#ffffff"/><path d="M810 50L543.1 909.5L549.5 911.5Z" fill="#ffffff"/><path d="M810 50L546.9 910.7L553.3 912.6Z" fill="#ffffff"/><path d="M810 50L550.6 911.8L557.0 913.7Z" fill="#ffffff"/><path d="M810 50L554.4 912.9L560.8 914.8Z" fill="#ffffff"/><path d="M810 50L558.2 914.0L564.6 915.9Z" fill="#ffffff"/><path d="M810 50L561.9 915.1L568.4 917.0Z" fill="#ffffff"/><path d="M810 50L565.7 916.2L572.1 918.0Z" fill="#ffffff"/><path d="M810 50L569.5 917.3L575.9 919.0Z" fill="#ffffff"/><path d="M810 50L573.3 918.3L579.7 920.0Z" fill="#ffffff"/><path d="M810 50L577.1 919.3L583.5 921.0Z" fill="#ffffff"/><path d="M810 50L580.9 920.3L587.3 922.0Z" fill="#ffffff"/><path d="M810 50L584.7 921.3L591.1 923.0Z" fill="#ffffff"/><path d="M810 50L588.5 922.3L594.9 923.9Z" fill="#ffffff"/><path d="M810 50L592.3 923.3L598.8 924.9Z" fill="#ffffff"/><path d="M810 50L596.1 924.2L602.6 925.8Z" fill="#ffffff"/><path d="M810 50L599.9 925.1L606.4 926.7Z" fill="#ffffff"/><path d="M810 50L603.7 926.0L610.2 927.5Z" fill="#ffffff"/><path d="M810 50L607.5 926.9L614.1 928.4Z" fill="#ffffff"/><path d="M810 50L611.4 927.8L617.9 929.3Z" fill="#ffffff"/><path d="M810 50L615.2 928.7L621.7 930.1Z" fill="#ffffff"/><path d="M810 50L619.0 929.5L625.6 930.9Z" fill="#ffffff"/><path d="M810 50L622.9 930.3L629.4 931.7Z" fill="#ffffff"/><path d="M810 50L626.7 931.1L633.3 932.5Z" fill="#ffffff"/><path d="M810 50L630.6 931.9L637.1 933.2Z" fill="#ffffff"/><path d="M810 50L634.4 932.7L641.0 934.0Z" fill="#ffffff"/><path d="M810 50L638.3 933.5L644.8 934.7Z" fill="#ffffff"/><path d="M810 50L642.1 934.2L648.7 935.4Z" fill="#ffffff"/><path d="M810 50L646.0 934.9L652.6 936.1Z" fill="#ffffff"/><path d="M810 50L649.9 935.6L656.4 936.8Z" fill="#ffffff"/><path d="M810 50L653.7 936.3L660.3 937.5Z" fill="#ffffff"/><path d="M810 50L657.6 937.0L664.2 938.1Z" fill="#ffffff"/><path d="M810 50L661.5 937.7L668.0 938.7Z" fill="#fdfdff"/><path d="M810 50L665.3 938.3L671.9 939.3Z" fill="#fafaff"/><path d="M810 50L669.2 938.9L675.8 939.9Z" fill="#f7f7ff"/><path d="M810 50L673.1 939.5L679.7 940.5Z" fill="#f4f4ff"/><path d="M810 50L677.0 940.1L683.6 941.1Z" fill="#f0f0ff"/><path d="M810 50L680.9 940.7L687.5 941.6Z" fill="#ededff"/><path d="M810 50L684.7 941.2L691.4 942.1Z" fill="#eaeaff"/><path d="M810 50L688.6 941.8L695.3 942.7Z" fill="#e6e6ff"/><path d="M810 50L692.5 942.3L699.1 943.1Z" fill="#e3e3ff"/><path d="M810 50L696.4 942.8L703.0 943.6Z" fill="#e0e0ff"/><path d="M810 50L700.3 943.3L706.9 944.1Z" fill="#ddddff"/><path d="M810 50L704.2 943.8L710.8 944.5Z" fill="#d9d9ff"/><path d="M810 50L708.1 944.2L714.8 944.9Z" fill="#d6d6ff"/><path d="M810 50L712.0 944.7L718.7 945.4Z" fill="#d3d3ff"/><path d="M810 50L715.9 945.1L722.6 945.7Z" fill="#cfcfff"/><path d="M810 50L719.8 945.5L726.5 946.1Z" fill="#ccccff"/><path d="M810 50L723.7 945.9L730.4 946.5Z" fill="#c9c9ff"/><path d="M810 50L727.6 946.2L734.3 946.8Z" fill="#c6c6ff"/><path d="M810 50L731.6 946.6L738.2 947.1Z" fill="#c4c4ff"/><path d="M810 50L735.5 946.9L742.1 947.4Z" fill="#c4c4ff"/><path d="M810 50L739.4 947.2L746.0 947.7Z" fill="#c4c4ff"/><path d="M810 50L743.3 947.5L750.0 948.0Z" fill="#c4c4ff"/><path d="M810 50L747.2 947.8L753.9 948.2Z" fill="#c4c4ff"/><path d="M810 50L751.1 948.1L757.8 948.5Z" fill="#c4c4ff"/><path d="M810 50L755.1 948.3L761.7 948.7Z" fill="#c4c4ff"/><path d="M810 50L759.0 948.6L765.6 948.9Z" fill="#c4c4ff"/><path d="M810 50L762.9 948.8L769.6 949.1Z" fill="#c4c4ff"/><path d="M810 50L766.8 949.0L773.5 949.3Z" fill="#c4c4ff"/><path d="M810 50L770.7 949.1L777.4 949.4Z" fill="#c4c4ff"/><path d="M810 50L774.7 949.3L781.3 949.5Z" fill="#c4c4ff"/><path d="M810 50L778.6 949.5L785.3 949.7Z" fill="#c4c4ff"/><path d="M810 50L782.5 949.6L789.2 949.8Z" fill="#c4c4ff"/><path d="M810 50L786.4 949.7L793.1 949.8Z" fill="#c4c4ff"/><path d="M810 50L790.4 949.8L797.0 949.9Z" fill="#c4c4ff"/><path d="M810 50L794.3 949.9L801.0 950.0Z" fill="#c4c4ff"/><path d="M810 50L798.2 949.9L804.9 950.0Z" fill="#c4c4ff"/><path d="M810 50L802.1 950.0L808.8 950.0Z" fill="#c4c4ff"/><path d="M810 50L806.1 950.0L812.7 950.0Z" fill="#c4c4ff"/></g>
<path d="M476.5 507.3 C485 510 490 512 498.1 513.8 C505 515.5 512 517.3 518.8 517.3 C525 517.2 530 516.5 534.2 515 C539 513.5 543 512 545 510.8 C535 515 528 518 523.5 518.5 C518 520 513 523 508.1 523.8 C503 524.8 496 523.5 491.9 521.9 C488 520 486 518.5 484.2 516.9 C481 514 479 511 477.7 509.2 Z" fill="url(#clipface)"/>
<path d="M429.8 522.3 L482.1 457.1 L481 480 L480.4 492.4 L476.5 507.3 L477.6 510.9 L468.5 521.5 L476.1 526 L475.3 526.8 C474 529 472.5 530.5 471.5 531.4 C468 534.5 465 537 461.7 537.4 C456 538.6 452 538.8 450.3 538.6 C445 537 441 535 438.9 532.9 C435 530 432 526 429.8 522.3 Z" fill="#a8a8c8"/>
<path d="M429.8 522.3 C432 526 435 530 438.9 532.9 C441 535 445 537 450.3 538.6 L451.8 540.5 C447 542.5 440 546 435.2 546.5 C431 547.3 427 546 425.3 543.5 C423.5 540 423.6 533 426.1 529.1 C427 526.5 428.5 524 429.8 522.3 Z" fill="url(#tipg)"/>
<circle cx="453" cy="513.6" r="4.3" fill="url(#hole1g)" stroke="#111" stroke-width="1.1"/>
<path d="M482.1 457.1 C485 451 487 449 489.7 446.5 C493 441.5 497 438 500.3 435.9 C504 433 508 431.8 511.7 431.4 C514 431.5 517 432 519.2 433.3 C521 434.5 523 436 524.5 437.4 L529.8 442.3 L491.2 488.8 L480.6 492 Z" fill="#eaeafc"/>
<path d="M480.6 492 L491.2 488.8 L485.8 495.4 Z" fill="#9494b4"/>
<path d="M784.4 641.3 M784.4 641.3 C783.6 642.5 782.0 646.3 779.6 648.4 C777.2 650.5 773.6 652.2 769.8 653.7 C765.9 655.2 761.7 656.6 756.5 657.3 C751.3 658.0 744.9 658.3 738.8 658.1 C732.7 657.9 727.0 657.0 720.0 656.2 C713.0 655.4 704.7 654.4 697.0 653.3 C689.3 652.1 683.5 651.3 673.9 649.3 C664.3 647.3 651.6 644.9 639.3 641.2 C627.0 637.5 613.1 632.3 600.0 627.0 C586.9 621.7 572.2 615.0 560.6 609.6 C549.0 604.2 539.5 599.5 530.3 594.4 C521.1 589.3 514.7 585.1 505.5 579.2 C496.3 573.3 482.8 564.2 475.2 558.8 C467.6 553.4 463.8 550.0 460.0 547.0 C456.2 544.0 453.8 541.8 452.5 540.8 L451.8 540.5 C447 542.5 440 546 435.2 546.5 C431 547.3 427 546 425.3 543.5 C423.5 540 423.6 533 426.1 529.1 C427 526.5 428.5 524 429.8 522.3 L482.1 457.1" fill="none" stroke="#111" stroke-width="1.15" stroke-linejoin="round" stroke-linecap="round"/>
<path d="M551.2 502.3 C557.6 504.1 576.8 509.3 589.3 513.4 C601.8 517.5 613.9 522.3 626.2 527.0 C638.5 531.7 650.9 536.4 663.2 541.7 C675.5 547.0 685.9 551.0 700.0 559.0 C714.1 567.0 736.8 582.5 747.7 590.0 C758.6 597.5 760.2 599.3 765.4 604.2 C770.6 609.1 775.6 614.9 778.7 619.2 C781.8 623.5 783.0 626.4 784.0 629.8 C785.0 633.2 784.5 638.0 784.6 639.6" fill="none" stroke="#111" stroke-width="1.15" stroke-linejoin="round" stroke-linecap="round"/>
<path d="M545.0 510.8 C552.4 512.9 575.8 519.2 589.3 523.3 C602.8 527.4 613.9 530.9 626.2 535.6 C638.5 540.3 652.6 546.8 663.2 551.6 C673.8 556.4 681.9 560.4 690.0 564.5 C698.1 568.6 704.5 571.3 711.8 576.1 C719.0 580.9 727.5 587.9 733.5 593.5 C739.5 599.1 744.0 604.5 747.7 609.5 C751.4 614.5 754.4 620.2 755.7 623.6 C757.0 627.0 756.3 627.9 755.7 629.8 C755.1 631.7 754.2 633.3 752.1 635.1 C750.0 636.9 747.0 639.0 743.3 640.4 C739.6 641.8 735.2 642.9 730.0 643.5 C724.8 644.1 717.3 644.5 711.8 644.3 C706.3 644.1 703.3 643.3 697.0 642.4 C690.7 641.5 683.5 640.8 673.9 638.9 C664.3 637.0 651.6 634.4 639.3 630.8 C627.0 627.1 613.1 622.4 600.0 617.0 C586.9 611.6 572.2 604.3 560.6 598.5 C549.0 592.7 539.5 587.3 530.3 582.3 C521.1 577.3 511.5 572.3 505.5 568.6 C499.5 564.9 497.9 563.4 494.1 560.3 C490.3 557.1 485.9 553.0 482.7 549.7 C479.5 546.4 477.1 543.2 475.2 540.6 C473.2 538.0 471.7 534.9 471.0 533.8" fill="none" stroke="#111" stroke-width="1.15" stroke-linejoin="round" stroke-linecap="round"/>
<path d="M429.8 522.3 C432 526 435 530 438.9 532.9 C441 535 445 537 450.3 538.6 C452 538.8 456 538.6 461.7 537.4 C465 537 468 534.5 471.5 531.4 C472.5 530.5 474 529 475.3 526.8 L476.1 526 L468.5 521.5 L477.6 510.9" fill="none" stroke="#111" stroke-width="1.15" stroke-linejoin="round" stroke-linecap="round"/>
<path d="M482.1 457.1 C485 451 487 449 489.7 446.5 C493 441.5 497 438 500.3 435.9 C504 433 508 431.8 511.7 431.4 C514 431.5 517 432 519.2 433.3 C521 434.5 523 436 524.5 437.4 L529.8 442.3 L476.5 507.3" fill="none" stroke="#111" stroke-width="1.15" stroke-linejoin="round" stroke-linecap="round"/>
<path d="M482.1 457.1 L481 480 L480.6 492 L491.2 488.8" fill="none" stroke="#111" stroke-width="1.15" stroke-linejoin="round" stroke-linecap="round"/>
<path d="M476.5 507.3 C485 510 490 512 498.1 513.8 C505 515.5 512 517.3 518.8 517.3 C525 517.2 530 516.5 534.2 515 C539 513.5 543 512 545 510.8 L551.2 502.3" fill="none" stroke="#111" stroke-width="1.15" stroke-linejoin="round" stroke-linecap="round"/>
<path d="M477.7 509.2 C479 511 481 514 484.2 516.9 C486 518.5 488 520 491.9 521.9 C496 523.5 503 524.8 508.1 523.8 C513 523 518 520 523.5 518.5" fill="none" stroke="#111" stroke-width="1.15" stroke-linejoin="round" stroke-linecap="round"/>
<path d="M670.0 343.2 C668.1 343.1 662.4 342.6 658.5 342.7 C654.6 342.8 651.4 342.8 646.9 343.8 C642.4 344.8 636.6 346.4 631.5 348.8 C626.4 351.2 621.3 354.4 616.2 358.1 C611.1 361.8 605.7 366.6 600.8 371.2 C595.9 375.8 592.0 378.9 586.9 385.4 C581.8 391.8 572.8 405.8 570.0 409.9 L514.2 490.8" fill="none" stroke="#111" stroke-width="1.15" stroke-linejoin="round" stroke-linecap="round"/>
<path d="M508.1 498.5 L498.1 513.8" fill="none" stroke="#111" stroke-width="1.15" stroke-linejoin="round" stroke-linecap="round"/>
<path d="M533.8 394.6 C534.9 393.6 538.1 390.0 540.4 388.4 C542.7 386.8 544.9 385.7 547.4 384.9 C549.9 384.1 552.5 383.7 555.5 383.4 C558.5 383.1 560.4 382.9 565.6 383.2 C570.8 383.5 580.3 384.5 586.9 385.4 C593.5 386.3 599.0 387.0 605.0 388.4 C611.0 389.8 612.3 390.2 623.0 393.6 C633.7 397.0 656.1 403.9 669.0 408.5 C681.9 413.1 686.8 414.6 700.5 420.9 C714.2 427.1 737.5 437.6 751.0 446.0 C764.5 454.4 774.3 463.4 781.3 471.4 C788.2 479.4 790.8 490.2 792.7 494.0" fill="none" stroke="#111" stroke-width="1.15" stroke-linejoin="round" stroke-linecap="round"/>
<path d="M708 576.5 L696.4 641.8" fill="none" stroke="#111" stroke-width="1.15" stroke-linejoin="round" stroke-linecap="round"/>
<ellipse cx="513.1" cy="495" rx="7.3" ry="3.9" fill="url(#hole1g)" stroke="#111" stroke-width="1.1"/>
<path d="M882.1 184.4 L932.1 209.7 L911.7 262.1 L861.7 236.7 Z" fill="#97979b"/>
<path d="M858.6 191.2 L882.1 184.4 L861.7 236.7 L837.4 244.2 Z" fill="#939397"/>
<path d="M837.4 244.2 L861.7 236.7 L911.7 262.1 L886.7 269.2 Z" fill="#939397"/>
<path d="M882.1 184.4 L932.1 209.7 L911.7 262.1 L886.7 269.2 L837.4 244.2 L858.6 191.2 Z" fill="none" stroke="#1b6aa6" stroke-width="1.7" stroke-linejoin="round"/>
<path d="M882.1 184.4 L861.7 236.7 L837.4 244.2 M861.7 236.7 L911.7 262.1" fill="none" stroke="#1b6aa6" stroke-width="1.7" stroke-linejoin="round"/>
<text x="897" y="227" font-size="12.5" fill="#222" text-anchor="middle" transform="rotate(22 897 223)">BACK</text>
<text x="0" y="0" font-size="7.5" fill="#333" text-anchor="middle" transform="translate(860.5 216) rotate(-20) skewY(-40) scale(0.75 1)">RIGHT</text>
<text x="0" y="0" font-size="8.5" font-weight="bold" fill="#2a2a2a" text-anchor="middle" letter-spacing="1.6" transform="translate(875 254) rotate(28) skewX(-25) scale(1 0.62)">BOTTOM</text>
<defs>
<linearGradient id="zg" x1="0" y1="0" x2="1" y2="0"><stop offset="0" stop-color="#1f4fc0"/><stop offset="0.5" stop-color="#5a8cf0"/><stop offset="1" stop-color="#1a3a90"/></linearGradient>
<linearGradient id="yg" x1="0" y1="0" x2="0" y2="1"><stop offset="0" stop-color="#9ad850"/><stop offset="0.5" stop-color="#60b030"/><stop offset="1" stop-color="#3a7a20"/></linearGradient>
<radialGradient id="xg" cx="0.35" cy="0.35" r="0.7"><stop offset="0" stop-color="#f08080"/><stop offset="0.6" stop-color="#c03030"/><stop offset="1" stop-color="#802020"/></radialGradient>
</defs>
<line x1="418.5" y1="730.5" x2="405" y2="735.5" stroke="#c03838" stroke-width="3.2"/>
<circle cx="405" cy="735.8" r="4.8" fill="url(#xg)"/>
<line x1="418.5" y1="730.5" x2="392" y2="717" stroke="#5aa830" stroke-width="3.4"/>
<path d="M385 714.5 L394 711.5 L391.5 721.5 Z" fill="#8cd050" stroke="#4a9a28" stroke-width="0.8"/>
<line x1="418.5" y1="730.5" x2="429" y2="704" stroke="#3a6ee0" stroke-width="3.2"/>
<path d="M427.5 697 L434.5 703.5 L424.5 703 Z" fill="#2a5ad8" stroke="#1a3a90" stroke-width="0.8"/>
<text x="434.5" y="688.5" font-size="10" fill="#3a64c8">Z</text>
<text x="375.8" y="709.8" font-size="8.5" fill="#6ab040">Y</text>
<path d="M556.5 151.5 L556.5 167.5 L560 164 L563 170 L565.5 169 L562.8 162.8 L567.5 162.5 Z" fill="#fff" stroke="#000" stroke-width="1" stroke-linejoin="miter"/>
</svg></body></html>
